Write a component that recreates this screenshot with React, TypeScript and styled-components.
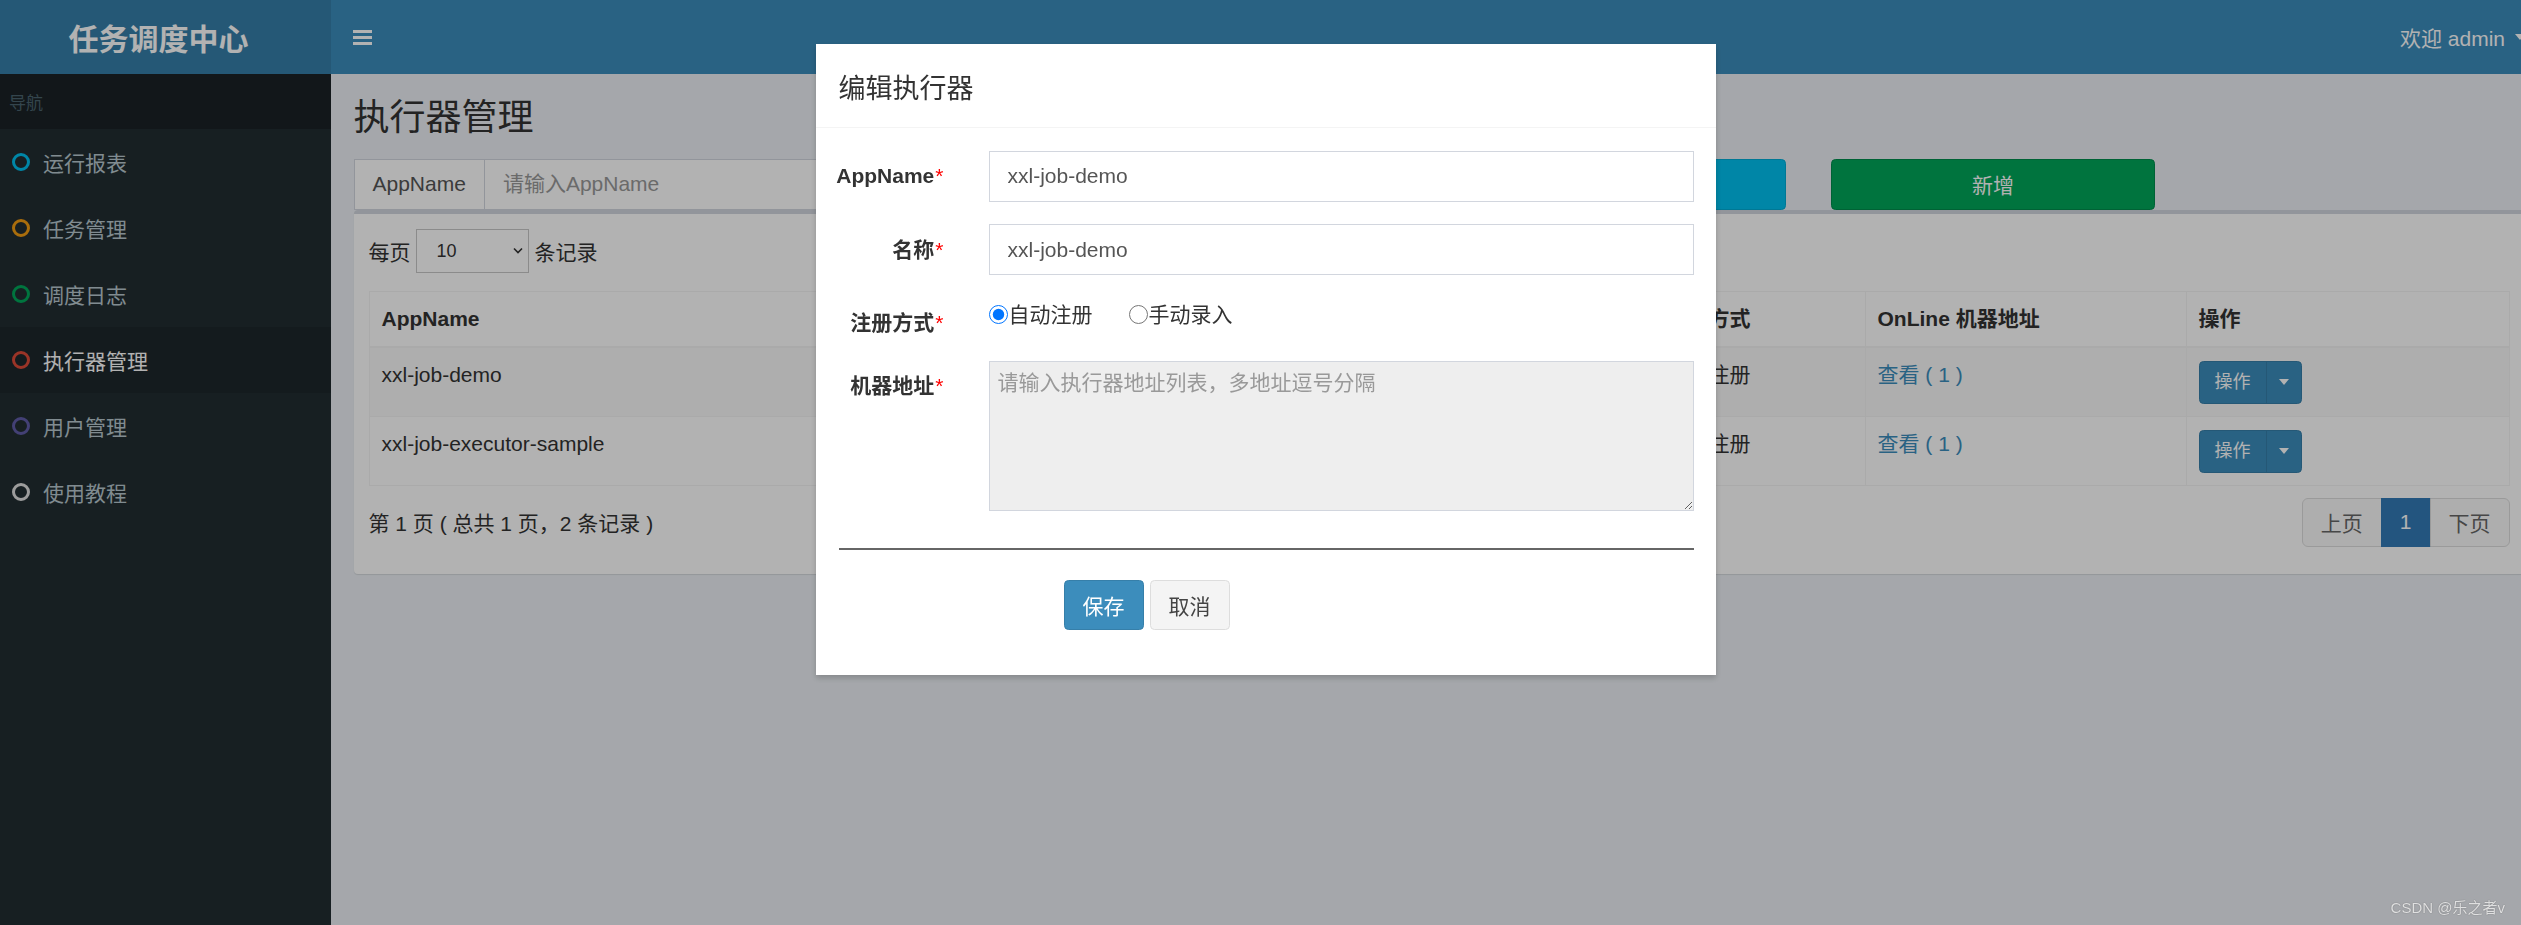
import styled, { createGlobalStyle } from 'styled-components';

const GlobalStyle = createGlobalStyle`
  html, body {
    margin: 0;
    padding: 0;
    overflow: hidden;
    background: #ecf0f5;
  }
  body {
    font-family: "Liberation Sans", "Noto Sans CJK SC", sans-serif;
    font-size: 21px;
    color: #333;
  }
  * { box-sizing: border-box; }
`;

const FONT = `"Liberation Sans", "Noto Sans CJK SC", sans-serif`;

const Page = styled.div`
  width: 2547px;
  height: 925px;
  display: grid;
  grid-template-columns: 331px 1fr;
  grid-template-rows: 74px 1fr;
`;

const Logo = styled.div`
  background: #367fa9;
  color: #fff;
  font-size: 30px;
  font-weight: bold;
  display: flex;
  align-items: center;
  justify-content: center;
  padding-right: 14px;
`;

const Navbar = styled.div`
  background: #3c8dbc;
  display: flex;
  align-items: center;
  justify-content: space-between;
  padding: 0 22px 0 22px;
`;

const Burger = styled.svg`
  width: 19px;
  height: 15px;
  display: block;
`;

const UserMenu = styled.div`
  color: #fff;
  font-size: 21px;
  display: flex;
  align-items: center;
  gap: 10px;
`;

const Caret = styled.span<{ $color?: string }>`
  display: inline-block;
  width: 0;
  height: 0;
  border-left: 5px solid transparent;
  border-right: 5px solid transparent;
  border-top: 6px solid ${p => p.$color || '#fff'};
`;

const Sidebar = styled.div`
  background: #222d32;
`;

const NavHeader = styled.div`
  background: #1a2226;
  color: #4b646f;
  font-size: 17px;
  height: 55px;
  display: flex;
  align-items: center;
  padding-left: 9px;
`;

const NavItem = styled.div<{ $active?: boolean }>`
  height: 66px;
  display: flex;
  align-items: center;
  padding-left: 12px;
  font-size: 21px;
  color: ${p => (p.$active ? '#fff' : '#b8c7ce')};
  background: ${p => (p.$active ? '#1e282c' : 'transparent')};
`;

const NavIcon = styled.span`
  width: 31px;
  display: flex;
  align-items: center;
`;

const Ring = styled.span<{ $color: string }>`
  width: 18px;
  height: 18px;
  border-radius: 50%;
  border: 3px solid ${p => p.$color};
`;

const Content = styled.div`
  padding: 22px 22.5px;
  display: flex;
  flex-direction: column;
`;

const PageTitle = styled.h1`
  margin: 2px 0 20.5px;
  font-size: 36px;
  font-weight: 400;
  line-height: 40px;
  color: #333;
`;

const SearchRow = styled.div`
  display: grid;
  grid-template-columns: repeat(12, 1fr);
  column-gap: 45px;
`;

const SearchCell = styled.div<{ $span: number }>`
  grid-column: span ${p => p.$span};
  display: flex;
`;

const Addon = styled.span`
  height: 51px;
  padding: 0 18px;
  display: flex;
  align-items: center;
  border: 1px solid #d2d6de;
  background: #fff;
  color: #555;
  font-size: 21px;
  white-space: nowrap;
`;

const SearchInput = styled.input`
  flex: 1;
  min-width: 0;
  height: 51px;
  border: 1px solid #d2d6de;
  border-left: none;
  padding: 0 18px;
  font-family: ${FONT};
  font-size: 21px;
  color: #555;
  &::placeholder { color: #999; }
`;

const BlockButton = styled.button<{ $bg: string; $border: string }>`
  width: 100%;
  height: 51px;
  border-radius: 4.5px;
  border: 1px solid ${p => p.$border};
  background: ${p => p.$bg};
  color: #fff;
  font-family: ${FONT};
  font-size: 21px;
`;

const Box = styled.div`
  background: #fff;
  border-top: 4px solid #d2d6de;
  border-radius: 4px;
  box-shadow: 0 1px 1px rgba(0, 0, 0, 0.1);
  padding: 15px;
`;

const LengthRow = styled.div`
  display: flex;
  align-items: center;
  font-size: 21px;
  height: 44px;
`;

const SelectWrap = styled.span`
  position: relative;
  display: inline-block;
  margin: 0 6px 0 5px;
`;

const Select = styled.select`
  appearance: none;
  width: 113px;
  height: 44px;
  border: 1px solid #c7c7c7;
  border-radius: 0;
  background: #fff;
  padding: 0 0 0 20px;
  font-family: ${FONT};
  font-size: 18px;
  color: #333;
`;

const Chevron = styled.svg`
  position: absolute;
  right: 6px;
  top: 18px;
  width: 10px;
  height: 7px;
  pointer-events: none;
`;

const Table = styled.table`
  margin-top: 18px;
  width: 100%;
  border-collapse: collapse;
  border: 1px solid #f4f4f4;
  table-layout: fixed;
`;

const Th = styled.th<{ $w: number }>`
  width: ${p => p.$w}px;
  text-align: left;
  font-weight: bold;
  font-size: 21px;
  line-height: 30px;
  padding: 12px;
  border: 1px solid #f4f4f4;
  border-bottom: 2px solid #f4f4f4;
  white-space: nowrap;
  overflow: hidden;
`;

const Tr = styled.tr<{ $striped?: boolean }>`
  background: ${p => (p.$striped ? '#f9f9f9' : '#fff')};
`;

const Td = styled.td`
  vertical-align: top;
  font-size: 21px;
  line-height: 30px;
  padding: 12px;
  height: 69px;
  border: 1px solid #f4f4f4;
  white-space: nowrap;
  overflow: hidden;
`;

const Link = styled.a`
  color: #3c8dbc;
  text-decoration: none;
`;

const SplitButton = styled.div`
  display: inline-flex;
  height: 43px;
  border-radius: 4.5px;
  overflow: hidden;
  border: 1px solid #367fa9;
  background: #3c8dbc;
  margin-top: 1px;
`;

const SplitMain = styled.span`
  display: flex;
  align-items: center;
  padding: 0 15px;
  color: #fff;
  font-size: 18px;
`;

const SplitToggle = styled.span`
  display: flex;
  align-items: center;
  padding: 0 12px;
  border-left: 1px solid #367fa9;
`;

const Footer = styled.div`
  display: flex;
  justify-content: space-between;
  align-items: center;
  margin-top: 12px;
  margin-bottom: 12px;
`;

const Info = styled.div`
  font-size: 21px;
  color: #333;
`;

const Pager = styled.div`
  display: flex;
  height: 49px;
`;

const PageLink = styled.span<{ $active?: boolean }>`
  display: flex;
  align-items: center;
  padding: 0 18px;
  font-size: 21px;
  border: 1px solid ${p => (p.$active ? '#337ab7' : '#ddd')};
  background: ${p => (p.$active ? '#337ab7' : '#fafafa')};
  color: ${p => (p.$active ? '#fff' : '#666')};
  margin-left: -1px;
  &:first-child { border-radius: 6px 0 0 6px; margin-left: 0; }
  &:last-child { border-radius: 0 6px 6px 0; }
`;

const Backdrop = styled.div`
  position: fixed;
  inset: 0;
  background: rgba(0, 0, 0, 0.3);
`;

const ModalLayer = styled.div`
  position: fixed;
  top: 0;
  left: 0;
  width: 2532px;
  padding-top: 44px;
  display: flex;
  justify-content: center;
`;

const Dialog = styled.div`
  width: 900px;
  background: #fff;
  box-shadow: 0 3px 6px rgba(0, 0, 0, 0.2);
`;

const ModalHeader = styled.div`
  padding: 26px 22.5px 19px;
  border-bottom: 1.5px solid #f4f4f4;
`;

const ModalTitle = styled.h4`
  margin: 0;
  font-size: 27px;
  font-weight: 400;
  line-height: 38px;
  color: #333;
`;

const ModalBody = styled.div`
  padding: 22.5px;
  display: flex;
  flex-direction: column;
`;

const FormGroup = styled.div`
  display: grid;
  grid-template-columns: 150px 750px;
  margin: 0 -22.5px 22.5px;
`;

const Label = styled.label`
  text-align: right;
  padding: 10.5px 22.5px 0 0;
  font-weight: bold;
  font-size: 21px;
  line-height: 30px;
  color: #333;
  white-space: nowrap;
`;

const Star = styled.span`
  color: #f00;
  font-weight: normal;
  margin-left: 1px;
`;

const Field = styled.div`
  padding: 0 22.5px;
`;

const TextInput = styled.input`
  width: 100%;
  height: 51px;
  border: 1px solid #d2d6de;
  padding: 0 18px;
  font-family: ${FONT};
  font-size: 21px;
  color: #555;
`;

const RadioLine = styled.div`
  padding-top: 2px;
  display: flex;
  align-items: center;
  line-height: 30px;
  font-size: 21px;
  color: #333;
`;

const RadioOption = styled.label<{ $gap?: number }>`
  display: inline-flex;
  align-items: center;
  gap: 1px;
  margin-left: ${p => p.$gap || 0}px;
`;

const Radio = styled.input`
  width: 19px;
  height: 19px;
  margin: 0;
`;

const TextArea = styled.textarea`
  display: block;
  width: 100%;
  height: 150px;
  background: #eee;
  border: 1px solid #d2d6de;
  padding: 6px 8px;
  font-family: ${FONT};
  font-size: 21px;
  line-height: 30px;
  color: #555;
  resize: vertical;
  &::placeholder { color: #999; }
`;

const Divider = styled.hr`
  width: 100%;
  margin: 15px 0 30px;
  border: none;
  border-top: 2px solid #666;
`;

const Actions = styled.div`
  padding-left: 225px;
  margin-bottom: 22.5px;
  display: flex;
  gap: 6px;
`;

const Btn = styled.button<{ $primary?: boolean }>`
  height: 50px;
  padding: 0 18px;
  border-radius: 4.5px;
  font-family: ${FONT};
  font-size: 21px;
  border: 1px solid ${p => (p.$primary ? '#367fa9' : '#ddd')};
  background: ${p => (p.$primary ? '#3c8dbc' : '#f4f4f4')};
  color: ${p => (p.$primary ? '#fff' : '#444')};
`;

const Watermark = styled.div`
  position: fixed;
  right: 16px;
  bottom: 8px;
  font-size: 15px;
  color: rgba(255, 255, 255, 0.8);
  text-shadow: 0 0 1px rgba(0, 0, 0, 0.5);
`;

const menu = [
  { label: '运行报表', color: '#00c0ef' },
  { label: '任务管理', color: '#f39c12' },
  { label: '调度日志', color: '#00a65a' },
  { label: '执行器管理', color: '#dd4b39', active: true },
  { label: '用户管理', color: '#605ca8' },
  { label: '使用教程', color: '#e0e0e0' },
];

const rows = [
  { app: 'xxl-job-demo', title: '示例执行器', type: '自动注册' },
  { app: 'xxl-job-executor-sample', title: '通用执行器Sample', type: '自动注册' },
];

export default function App() {
  return (
    <>
      <GlobalStyle />
      <Page>
        <Logo>任务调度中心</Logo>
        <Navbar>
          <Burger viewBox="0 0 19 15">
            <rect x="0" y="0" width="19" height="3" fill="#fff" />
            <rect x="0" y="6" width="19" height="3" fill="#fff" />
            <rect x="0" y="12" width="19" height="3" fill="#fff" />
          </Burger>
          <UserMenu>
            欢迎 admin <Caret />
          </UserMenu>
        </Navbar>
        <Sidebar>
          <NavHeader>导航</NavHeader>
          {menu.map(m => (
            <NavItem key={m.label} $active={m.active}>
              <NavIcon>
                <Ring $color={m.color} />
              </NavIcon>
              {m.label}
            </NavItem>
          ))}
        </Sidebar>
        <Content>
          <PageTitle>执行器管理</PageTitle>
          <SearchRow>
            <SearchCell $span={3}>
              <Addon>AppName</Addon>
              <SearchInput placeholder="请输入AppName" />
            </SearchCell>
            <SearchCell $span={3}>
              <Addon>名称</Addon>
              <SearchInput placeholder="请输入名称" />
            </SearchCell>
            <SearchCell $span={2}>
              <BlockButton $bg="#00c0ef" $border="#00acd6">搜索</BlockButton>
            </SearchCell>
            <SearchCell $span={2}>
              <BlockButton $bg="#00a65a" $border="#008d4c">新增</BlockButton>
            </SearchCell>
          </SearchRow>
          <Box>
            <LengthRow>
              每页
              <SelectWrap>
                <Select defaultValue="10">
                  <option value="10">10</option>
                  <option value="25">25</option>
                  <option value="50">50</option>
                </Select>
                <Chevron viewBox="0 0 10 7">
                  <path d="M1 1.5 L5 5.5 L9 1.5" fill="none" stroke="#333" strokeWidth="1.6" />
                </Chevron>
              </SelectWrap>
              条记录
            </LengthRow>
            <Table>
              <thead>
                <tr>
                  <Th $w={641}>AppName</Th>
                  <Th $w={644}>名称</Th>
                  <Th $w={211}>注册方式</Th>
                  <Th $w={321}>OnLine 机器地址</Th>
                  <Th $w={323}>操作</Th>
                </tr>
              </thead>
              <tbody>
                {rows.map((r, i) => (
                  <Tr key={r.app} $striped={i === 0}>
                    <Td>{r.app}</Td>
                    <Td>{r.title}</Td>
                    <Td>{r.type}</Td>
                    <Td>
                      <Link>查看 ( 1 )</Link>
                    </Td>
                    <Td>
                      <SplitButton>
                        <SplitMain>操作</SplitMain>
                        <SplitToggle>
                          <Caret />
                        </SplitToggle>
                      </SplitButton>
                    </Td>
                  </Tr>
                ))}
              </tbody>
            </Table>
            <Footer>
              <Info>第 1 页 ( 总共 1 页，2 条记录 )</Info>
              <Pager>
                <PageLink>上页</PageLink>
                <PageLink $active>1</PageLink>
                <PageLink>下页</PageLink>
              </Pager>
            </Footer>
          </Box>
        </Content>
      </Page>

      <Backdrop />
      <ModalLayer>
        <Dialog>
          <ModalHeader>
            <ModalTitle>编辑执行器</ModalTitle>
          </ModalHeader>
          <ModalBody>
            <FormGroup>
              <Label>
                AppName<Star>*</Star>
              </Label>
              <Field>
                <TextInput defaultValue="xxl-job-demo" />
              </Field>
            </FormGroup>
            <FormGroup>
              <Label>
                名称<Star>*</Star>
              </Label>
              <Field>
                <TextInput defaultValue="xxl-job-demo" />
              </Field>
            </FormGroup>
            <FormGroup>
              <Label>
                注册方式<Star>*</Star>
              </Label>
              <Field>
                <RadioLine>
                  <RadioOption>
                    <Radio type="radio" name="addressType" defaultChecked />
                    自动注册
                  </RadioOption>
                  <RadioOption $gap={36}>
                    <Radio type="radio" name="addressType" />
                    手动录入
                  </RadioOption>
                </RadioLine>
              </Field>
            </FormGroup>
            <FormGroup>
              <Label>
                机器地址<Star>*</Star>
              </Label>
              <Field>
                <TextArea readOnly placeholder="请输入执行器地址列表，多地址逗号分隔" />
              </Field>
            </FormGroup>
            <Divider />
            <Actions>
              <Btn $primary>保存</Btn>
              <Btn>取消</Btn>
            </Actions>
          </ModalBody>
        </Dialog>
      </ModalLayer>
      <Watermark>CSDN @乐之者v</Watermark>
    </>
  );
}
